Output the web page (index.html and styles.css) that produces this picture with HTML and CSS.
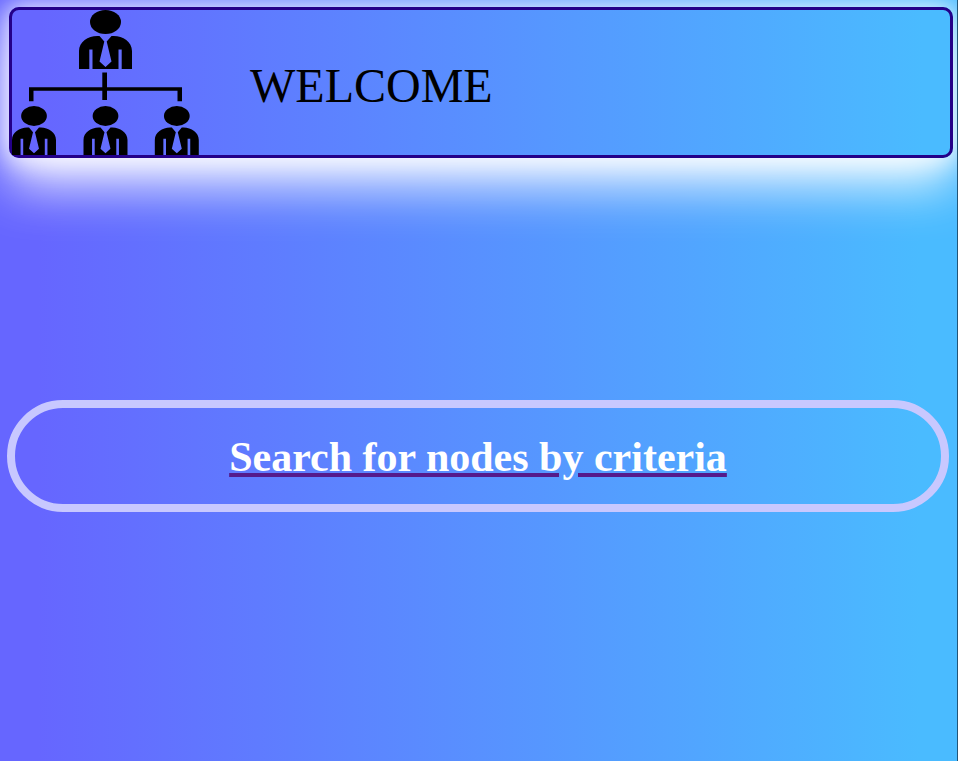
FILE: index.html
```html
<!DOCTYPE html>
<html lang="en">
<head>
<meta charset="utf-8">
<title>Welcome</title>
<link rel="stylesheet" href="styles.css">
</head>
<body>
<header class="banner">
  <svg class="logo" viewBox="12 10 188 145" width="188" height="145" aria-hidden="true">
    <defs>
      <g id="person">
        <ellipse cx="0" cy="12" rx="15.5" ry="12"/>
        <path d="M-6 26 L-1.200 31.500 L-6 51.500 L0 57 L6 51.500 L1.200 31.500 L6 26 C16 25 26.500 31 26.500 41 V59 H16.200 V39.500 H13 V59 H-13 V39.500 H-16.200 V59 H-26.500 V41 C-26.500 31 -16 25 -6 26Z"/>
      </g>
    </defs>
    <use href="#person" transform="translate(105.500 10)"/>
    <use href="#person" transform="translate(34 106) scale(.83)"/>
    <use href="#person" transform="translate(105.500 106) scale(.83)"/>
    <use href="#person" transform="translate(176.800 106) scale(.83)"/>
    <path d="M102.300 72.500h4.700v27.500h-4.700zM29 87.300h153v14h-4.500v-10.500h-144v10.500h-4.500z"/>
  </svg>
  <span class="title">WELCOME</span>
</header>
<main class="search">
  <a class="link" href="#"><span class="label">Search for nodes by criteria</span></a>
</main>
</body>
</html>
```
FILE: styles.css
```css
* { box-sizing: border-box; }
html { height: 100%; }
body {
  margin: 0;
  height: 761px;
  padding: 7px 4px 0 7px;
  overflow: hidden;
  border-right: 1px solid #225577;
  background: linear-gradient(to right, #6666ff 4%, #4abbff 96%);
  font-family: "Liberation Serif", "Times New Roman", serif;
}
.banner {
  display: flex;
  align-items: center;
  height: 151px;
  margin-left: 2px;
  border: 3px solid #240088;
  border-radius: 10px;
  background: linear-gradient(to right, #6666ff 3%, #4abbff 97%);
  box-shadow: 0 0 25px 4px rgba(255, 255, 255, .8), 0 28px 50px rgba(255, 255, 255, .88);
}
.logo { display: block; flex: none; }
.title { margin: 5px 0 0 50px; font-size: 48px; line-height: 55px; }
.search {
  display: flex;
  align-items: center;
  justify-content: center;
  height: 112px;
  margin: 242px 4px 0 0;
  padding-top: 2px;
  border: 8px solid #c8c8ff;
  border-radius: 56px;
}
.link {
  color: #551a8b;
  font-size: 42px;
  font-weight: bold;
  line-height: 48px;
  text-decoration: underline;
  text-decoration-thickness: 4px;
}
.label { color: #fff; }
```
